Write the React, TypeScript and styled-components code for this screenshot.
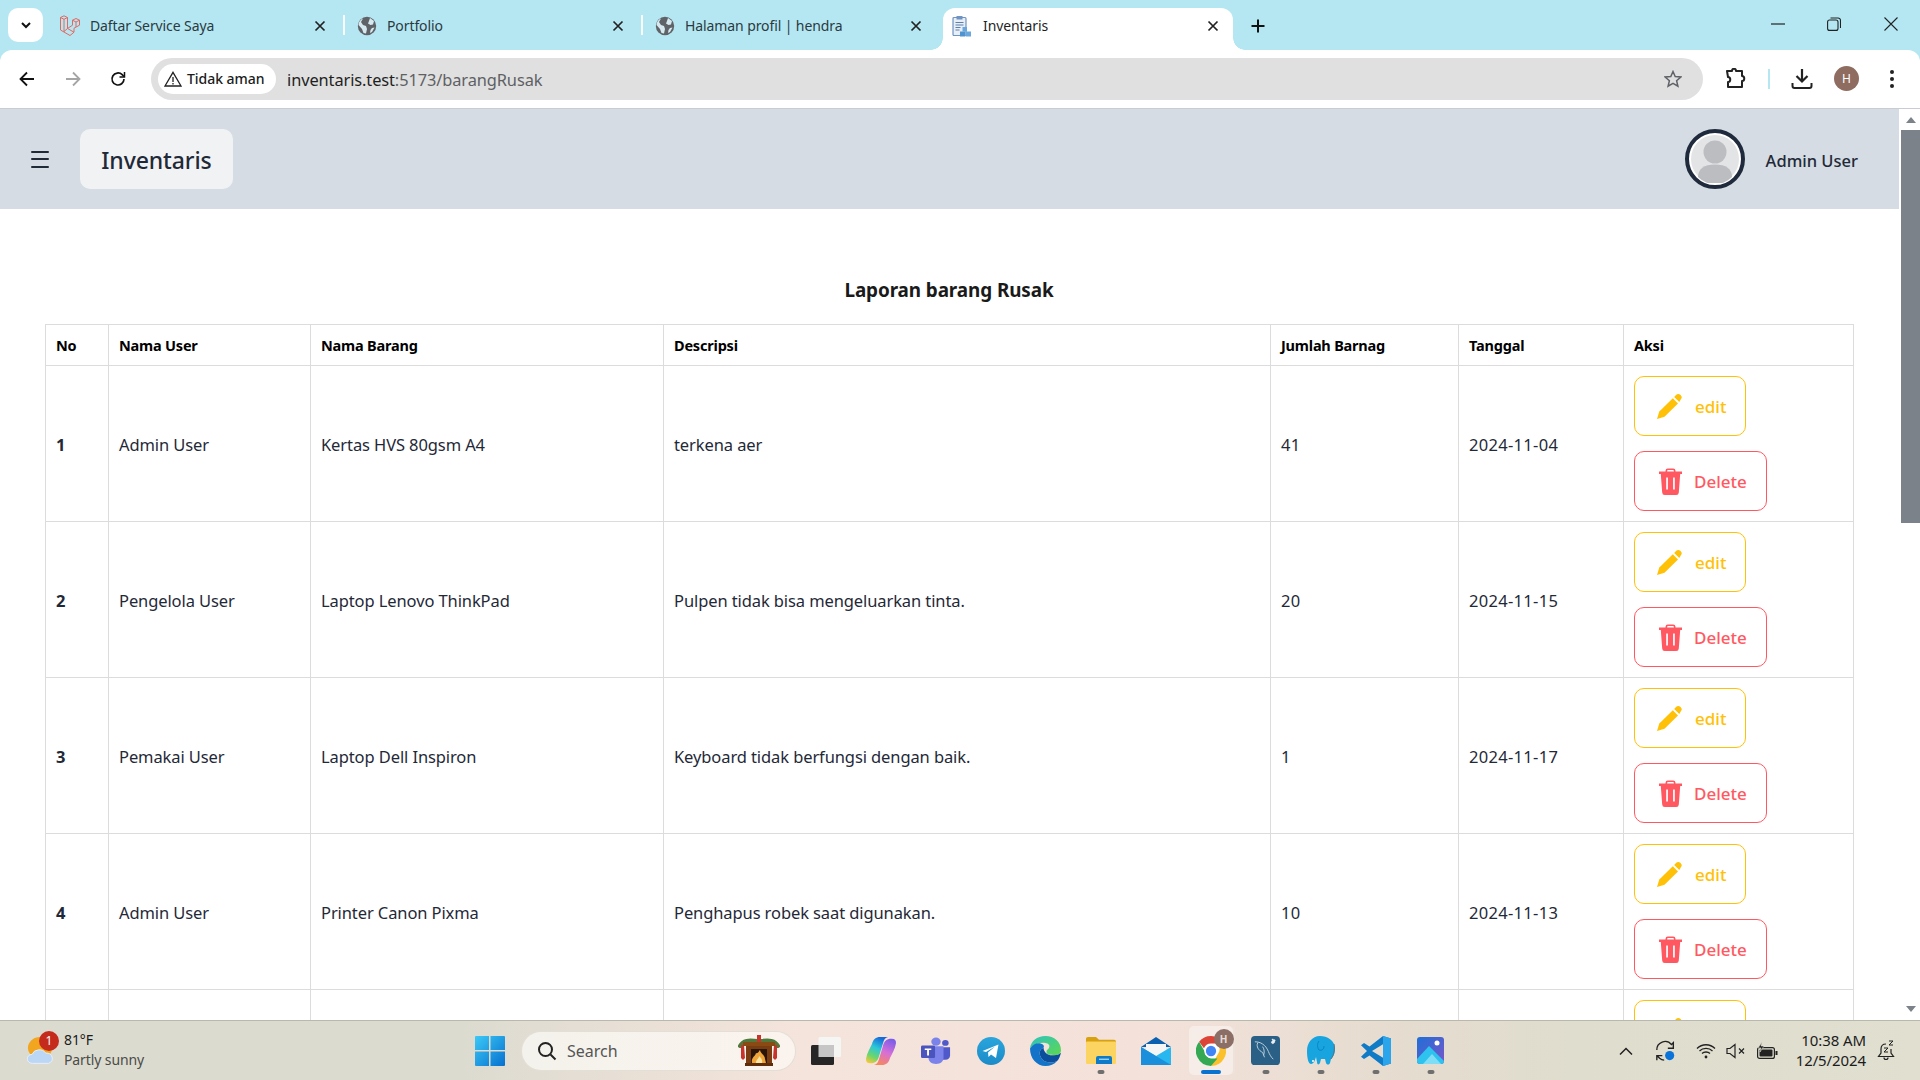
import React from "react";
import styled, { createGlobalStyle } from "styled-components";

const Global = createGlobalStyle`
  html, body { margin: 0; padding: 0; height: 100%; overflow: hidden; background: #fff; }
  body { font-family: "Noto Sans", "Open Sans", sans-serif; color: #1f2937; }
  * { box-sizing: border-box; }
`;

const Shell = styled.div`width: 1920px; height: 1080px; display: flex; flex-direction: column; overflow: hidden;`;

/* ---------- tab strip ---------- */
const TabStrip = styled.div`height: 50px; flex: none; background: #b5e7f3; display: flex; align-items: flex-start; position: relative;`;
const TabSearch = styled.div`width: 35px; height: 34px; margin: 8px 0 0 8px; background: #fff; border-radius: 10px; display: flex; align-items: center; justify-content: center;`;
const Tab = styled.div<{ $active?: boolean }>`
  width: ${p => (p.$active ? 290 : 298)}px; height: 42px; margin-top: 8px; flex: none;
  display: flex; align-items: center; padding: 0 ${p => (p.$active ? 14 : 18)}px 7px ${p => (p.$active ? 9 : 13)}px; gap: ${p => (p.$active ? 11 : 10)}px; position: relative;
  font-size: 14px; color: ${p => (p.$active ? "#1f1f1f" : "#2b3a40")};
  ${p => p.$active && `
    background: #fff; border-radius: 12px 12px 0 0; margin-left: 3px;
    &::before, &::after { content: ""; position: absolute; bottom: 0; width: 12px; height: 12px; }
    &::before { left: -12px; background: radial-gradient(circle at 0 0, #b5e7f3 11.5px, #fff 12px); }
    &::after { right: -12px; background: radial-gradient(circle at 100% 0, #b5e7f3 11.5px, #fff 12px); }
  `}
`;
const TabFirst = styled(Tab)`width: 299px; margin-left: 2px; padding-left: 14px; gap: 9px;`;
const TabTitle = styled.span`flex: 1; white-space: nowrap; overflow: hidden; letter-spacing: -.1px;`;
const TabSep = styled.i`width: 2px; height: 20px; background: #fff; flex: none; margin-top: 15px; margin-left: -1px; margin-right: -1px; opacity: .9;`;
const NewTab = styled.div`margin: 14px 0 0 13px; width: 24px; height: 24px; display: flex; align-items: center; justify-content: center;`;
const WinControls = styled.div`margin-left: auto; display: flex; align-items: center; height: 48px;`;
const WinBtn = styled.div<{ $w: number }>`width: ${p => p.$w}px; display: flex; justify-content: center;`;

/* ---------- toolbar ---------- */
const Toolbar = styled.div`height: 59px; flex: none; background: #b5e7f3;`;
const ToolbarInner = styled.div`height: 59px; background: #fff; border-radius: 12px 12px 0 0; border-bottom: 1px solid #c9ccd0; display: flex; align-items: center; padding: 0 0 1px 15px;`;
const NavIcon = styled.div<{ $mr?: number }>`width: 24px; height: 24px; margin-right: ${p => p.$mr ?? 22}px; display: flex; align-items: center; justify-content: center;`;
const Omnibox = styled.div`width: 1552px; height: 42px; flex: none; background: #e0e0e0; border-radius: 21px; display: flex; align-items: center; padding: 0 21px 0 7px;`;
const Chip = styled.div`width: 118px; height: 30px; border-radius: 15px; background: #fff; display: flex; align-items: center; gap: 5px; padding-left: 6px; font-size: 14px; font-weight: 500; color: #1b1b1b; white-space: nowrap; letter-spacing: -.05px;`;
const Url = styled.div`margin-left: 11px; padding-top: 2px; font-size: 16.4px; color: #5e6064; flex: 1; letter-spacing: -.1px; b { font-weight: 400; color: #1f1f1f; }`;
const TbRight = styled.div`display: flex; align-items: center; margin-left: 22px;`;
const TbSep = styled.i`width: 2px; height: 20px; background: #b5e7f3; margin: 0 21px 0 21px;`;
const ProfileDot = styled.div`width: 25px; height: 25px; border-radius: 50%; background: #8f6c60; color: #fff; font-size: 12px; display: flex; align-items: center; justify-content: center; margin: 0 30px 0 21px;`;

/* ---------- page ---------- */
const Viewport = styled.div`flex: 1; min-height: 0; display: flex;`;
const Page = styled.div`width: 1899px; flex: none; overflow: hidden; background: #fff;`;
const NavBar = styled.header`height: 100px; background: #d5dce4; display: flex; align-items: center; padding: 0 41px 0 30px;`;
const Burger = styled.div`width: 20px; display: flex; flex-direction: column; gap: 5.5px; margin-right: 30px; span { height: 2px; margin: 0 1px; background: #1f2937; border-radius: 1px; }`;
const Brand = styled.div`width: 153px; height: 60px; padding-top: 2px; border-radius: 10px; background: #f1f2f3; display: flex; align-items: center; justify-content: center; font-size: 23px; font-weight: 500; color: #1f2937; letter-spacing: -.1px;`;
const UserBox = styled.div`margin-left: auto; display: flex; align-items: center; gap: 21px; font-size: 16.5px; font-weight: 500; color: #1f2937;`;
const UserName = styled.span`padding-top: 3px;`;
const Avatar = styled.div`width: 60px; height: 60px; border-radius: 50%; border: 4px solid #1f2a3c; padding: 2px; background: #fff;`;
const Content = styled.main`padding: 0 46px 0 45px;`;
const Title = styled.h2`margin: 0; padding-top: 66px; height: 115px; line-height: 30px; text-align: center; font-size: 18.9px; font-weight: 700; color: #1a1a1a; letter-spacing: -.1px;`;
const Table = styled.table`width: 1808px; border-collapse: collapse; table-layout: fixed;`;
const Col = styled.col<{ $w: number }>`width: ${p => p.$w}px;`;
const Th = styled.th`height: 41px; border: 1px solid #dcdcdc; padding: 0 10px; text-align: left; font-size: 14.5px; font-weight: 700; color: #000; letter-spacing: -.2px;`;
const Td = styled.td<{ $bold?: boolean; $num?: boolean }>`border: 1px solid #dcdcdc; padding: 10px; font-size: 16.5px; color: #1f2937; font-weight: ${p => (p.$bold ? 700 : 400)}; letter-spacing: ${p => (p.$num ? ".3px" : "-.1px")};`;
const CellText = styled.span`display: block; padding-top: 1px;`;
const Actions = styled.div`display: flex; flex-direction: column; align-items: flex-start; gap: 15px;`;
const ActionBtn = styled.button<{ $c: string; $w: number; $pad: number }>`
  width: ${p => p.$w}px; height: 60px; border-radius: 10px; border: 1px solid ${p => p.$c}; background: #fff; color: ${p => p.$c};
  display: flex; align-items: center; gap: 12px; padding: 0 0 0 ${p => p.$pad}px; font: 500 17px "Noto Sans", sans-serif;
`;
const Scrollbar = styled.div`width: 21px; flex: none; background: #fff; display: flex; flex-direction: column; align-items: flex-end;`;
const ArrowBtn = styled.div<{ $h: number }>`width: 19px; height: ${p => p.$h}px; display: flex; align-items: center; justify-content: center;`;
const Thumb = styled.div`width: 19px; height: 393px; flex: none; background: #7c8289;`;
const Spacer = styled.div`flex: 1;`;

/* ---------- taskbar ---------- */
const Taskbar = styled.footer`height: 60px; flex: none; border-top: 1px solid #b9b8ae; display: flex; align-items: center;
  background: linear-gradient(90deg, #dcdbd0 0%, #dcdbd0 24%, #f5e4db 42%, #f4e2da 60%, #e6dcd0 72%, #dfddcd 82%, #e0dfd0 100%);`;
const Weather = styled.div`width: 462px; flex: none; display: flex; align-items: center; padding-left: 27px; gap: 9px; position: relative;`;
const WBadge = styled.div`position: absolute; left: 39px; top: -1px; width: 20px; height: 20px; border-radius: 50%; background: #c42b1c; color: #fff; font-size: 12px; display: flex; align-items: center; justify-content: center;`;
const WText = styled.div`margin-top: -2px; font-size: 14px; line-height: 20px; color: #1c1c1c; letter-spacing: -.1px; small { display: block; font-size: 14px; color: #4b4b48; }`;
const Slot = styled.div`width: 55px; height: 52px; flex: none; display: flex; align-items: center; justify-content: center; position: relative;`;
const ActiveSlot = styled(Slot)`width: 44px; height: 49px; margin: 0 5.5px; border-radius: 5px; background: #f6ede8; box-shadow: 3px 0 0 -1px #eee3dc;`;
const Pip = styled.i<{ $active?: boolean }>`position: absolute; left: 50%; bottom: ${p => (p.$active ? 1 : 3)}px; transform: translateX(-50%); height: 4px; border-radius: 2px; width: ${p => (p.$active ? 20 : 7)}px; background: ${p => (p.$active ? "#0a73d0" : "#6f6f6f")};`;
const HBadge = styled.div`position: absolute; right: -1px; top: 3px; width: 20px; height: 20px; border-radius: 50%; background: #8b6f66; color: #e8dcd6; font-size: 10px; font-weight: 700; display: flex; align-items: center; justify-content: center;`;
const SearchBox = styled.div`width: 273px; height: 38px; flex: none; margin: 0 3px 0 5px; border-radius: 19px; background: linear-gradient(90deg, #f4f2ec, #fbf3ee); box-shadow: 0 0 0 1px #e2dfd7; display: flex; align-items: center; padding: 0 15px; gap: 10px; font-size: 16px; color: #555; position: relative;`;
const Fire = styled.div`margin-left: auto; margin-right: 0; display: flex;`;
const Tray = styled.div`margin-left: auto; display: flex; align-items: center; height: 100%; position: relative; padding-right: 14px;`;
const TrayIcon = styled.div<{ $w: number }>`width: ${p => p.$w}px; display: flex; justify-content: center; align-items: center;`;
const Clock = styled.div`width: 79px; margin-top: -2px; text-align: right; font-size: 15px; line-height: 20px; color: #1c1c1c; margin-left: 2px; letter-spacing: -.1px; white-space: nowrap;`;

/* ---------- drawings ---------- */
const Globe = () => (
  <svg width="20" height="20" viewBox="0 0 20 20"><circle cx="10" cy="10" r="9.2" fill="#5f6368" />
    <path d="M6 2.500 4 6l2 3 3 1 1 3-1 4.500-2.500-.5L5 13 1.500 9C2 5 4 3 6 2.500ZM13 2l4 3-1 3.500-2.500.5L11 7.500 12 5Z M15 12l2.500-.5L15 16l-2 1 .5-3Z" fill="#d6e9ef" /></svg>
);
const Close = () => (
  <svg width="12" height="12" viewBox="0 0 12 12"><path d="M1.500 1.500l9 9M10.500 1.500l-9 9" stroke="#222" strokeWidth="1.700" /></svg>
);
const Laravel = () => (
  <svg width="22" height="22" viewBox="0 0 22 22" fill="none" stroke="#e4685f" strokeWidth="1"><path d="M1.500 2.500 5 .8l3.500 1.700v11L15 17.200 11 20.500 1.500 15ZM1.500 2.500 5 4.300l3.500-1.800M5 4.300v12.500M8.500 13.500l-3.500 3M15 17.200v-4l5.500-3v-5L17 3.500l-3.500 1.700v5L8.500 13.500M13.500 5.200 17 7l3.500-1.800M17 7v5" /></svg>
);
const Clipboard = () => (
  <svg width="20" height="22" viewBox="0 0 20 22"><rect x="1" y="2.500" width="13" height="18" rx="1" fill="#e8eef6" stroke="#6f93c2" strokeWidth="1.200" /><rect x="4.500" y="1" width="6" height="3.500" fill="#6f93c2" /><path d="M3.500 7.500h8M3.500 10h8M3.500 12.500h5M3.500 15h4" stroke="#5d7fae" /><rect x="10.500" y="12" width="4.500" height="4.500" fill="#6aa7dd" /><rect x="8" y="16.500" width="5" height="5" fill="#4f93d1" /><rect x="13.500" y="16.500" width="5.500" height="5" fill="#6aa7dd" /></svg>
);
const Pencil = () => (
  <svg width="26" height="26" viewBox="0 0 26 26" fill="currentColor"><path d="M0 26 2.300 18.600 15.800 5.300 21 10.500 7.500 23.800Z" /><path d="M17.200 3.900 19 2.100a3.200 3.200 0 0 1 4.700 4.400L22.300 9Z" /></svg>
);
const Trash = () => (
  <svg width="23" height="27" viewBox="0 0 23 27" fill="currentColor"><path d="M0 3.500h23v2.500H0Z" /><path d="M6.500 4V2.800A2.300 2.300 0 0 1 8.800.5h5.400a2.300 2.300 0 0 1 2.300 2.300V4h-1.600V3a1 1 0 0 0-1-1H9.100a1 1 0 0 0-1 1v1Z" /><path fillRule="evenodd" d="M1.800 6h19.400l-1.400 18.500A2.600 2.600 0 0 1 17.200 27H5.800a2.600 2.600 0 0 1-2.600-2.500ZM7.200 9.500v12h1.700v-12Zm6.900 0v12h1.700v-12Z" /></svg>
);
const Person = () => (
  <svg width="48" height="48" viewBox="0 0 48 48" style={{ display: "block" }}><circle cx="24" cy="24" r="24" fill="#e3e4e6" /><circle cx="24" cy="17" r="11.500" fill="#bcbdc0" /><path d="M7 42c0-8 6-12.500 17-12.500S41 34 41 42a24 24 0 0 1-34 0Z" fill="#bcbdc0" /></svg>
);
const WinLogo = () => (
  <svg width="30" height="30" viewBox="0 0 30 30"><defs><linearGradient id="wl" x1="0" y1="0" x2="1" y2="1"><stop offset="0" stopColor="#3cc9f6" /><stop offset="1" stopColor="#0670cf" /></linearGradient></defs><path fill="url(#wl)" d="M0 1a1 1 0 0 1 1-1h13v14H0ZM15.500 0H29a1 1 0 0 1 1 1v13H15.500ZM0 15.500h14V30H1a1 1 0 0 1-1-1ZM15.500 15.500H30V29a1 1 0 0 1-1 1H15.500Z" /></svg>
);
const Fireplace = () => (
  <svg width="42" height="31" viewBox="0 0 42 31">
    <path d="M2 11C5 5 11 5 19 6M40 11C37 5 31 5 23 6" fill="none" stroke="#4f7a3d" strokeWidth="4" strokeLinecap="round" />
    <rect x="19" y="0" width="4" height="7" fill="#c8342b" />
    <path d="M3 10h3l1 13-2 2-2-2ZM36 10h3l0 13-2 2-2-2Z" fill="#c8342b" />
    <rect x="5" y="7" width="32" height="4" fill="#8a4a14" />
    <rect x="8" y="11" width="26" height="18" fill="#7a3d12" />
    <rect x="7" y="28" width="28" height="3" fill="#5f2d0c" />
    <rect x="13" y="14" width="16" height="14" fill="#2a1609" />
    <path d="M14 28c-1-6 3-6 4-10 2 1 3-2 4-3 0 3 5 5 5 9l1 4Z" fill="#f0a53a" />
    <path d="M18 28c0-4 3-4 3-7 2 2 4 4 3 7Z" fill="#f9e7a6" />
  </svg>
);
const TaskView = () => (
  <svg width="30" height="28" viewBox="0 0 30 28"><rect x="7.500" y="0" width="22.500" height="20" rx="1.500" fill="#f5f5f4" /><rect x="0" y="8" width="23" height="20" rx="1.500" fill="#262626" /><rect x="7.500" y="8" width="15.500" height="12" fill="#c6c6c6" /></svg>
);
const Copilot = () => (
  <svg width="30" height="28" viewBox="0 0 30 32" preserveAspectRatio="none">
    <defs>
      <linearGradient id="cp1" x1=".6" y1="0" x2=".2" y2="1"><stop offset="0" stopColor="#1668dc" /><stop offset=".4" stopColor="#2cc7d8" /><stop offset=".75" stopColor="#6fd668" /><stop offset="1" stopColor="#f4c83a" /></linearGradient>
      <linearGradient id="cp2" x1=".7" y1="0" x2=".3" y2="1"><stop offset="0" stopColor="#7c5de8" /><stop offset=".5" stopColor="#d76fd8" /><stop offset="1" stopColor="#f7885c" /></linearGradient>
    </defs>
    <path d="M14 0h8c-3 1-4 3-5 7l-4 15c-1 5-4 8-8 8H4c-3 0-4-2-4-5 1-7 4-12 6-17 1-5 4-8 8-8Z" fill="url(#cp1)" />
    <path d="M16 32H8c3-1 4-3 5-7l4-15c1-5 4-8 8-8h1c3 0 4 2 4 5-1 7-4 12-6 17-1 5-4 8-8 8Z" fill="url(#cp2)" />
  </svg>
);
const Teams = () => (
  <svg width="30" height="27" viewBox="0 0 32 32" preserveAspectRatio="none"><circle cx="16" cy="5.500" r="5" fill="#7b83eb" /><circle cx="26" cy="7" r="3.500" fill="#5059c9" /><path d="M21 12h10v10c0 3-2 5-5 5h-5Z" fill="#5059c9" /><path d="M8 11h16v14c0 4-3 7-8 7s-8-3-8-7Z" fill="#7b83eb" /><rect x="0" y="10" width="15" height="15" rx="1.500" fill="#4b53bc" /><path d="M4 13.500h7v1.800H8.500V22h-2v-6.700H4Z" fill="#fff" /></svg>
);
const Telegram = () => (
  <svg width="28" height="28" viewBox="0 0 28 28"><defs><linearGradient id="tg" x1="0" y1="0" x2="0" y2="1"><stop offset="0" stopColor="#2aa5dc" /><stop offset="1" stopColor="#1b8bc8" /></linearGradient></defs><circle cx="14" cy="14" r="14" fill="url(#tg)" /><path d="M5.500 14 21.500 7.500 19 21l-5-3.500-2.500 2.500-.5-4.500 7-6-9 5.500Z" fill="#fff" /></svg>
);
const Edge = () => (
  <svg width="31" height="30" viewBox="0 0 32 36" preserveAspectRatio="none"><defs><linearGradient id="e1" x1="0" y1="0" x2="1" y2="1"><stop offset="0" stopColor="#2dc3c0" /><stop offset="1" stopColor="#5fd84f" /></linearGradient></defs><path d="M16 0c9 0 16 7 16 17 0 4-3 6-7 6-3 0-8 0-8-4 0-3 3-3 3-7S13 7 8 9C3 11 0 15 0 15 1 6 7 0 16 0Z" fill="url(#e1)" /><path d="M0 15c3-5 7-7 11-6 3 1 4 3 3 5-4 2-5 6-3 11 2 6 9 9 17 5-3 4-7 6-12 6C7 36 0 27 0 15Z" fill="#1273c9" /><path d="M11 25c-2-5-1-9 3-11 0 5 4 10 11 9 3 0 5-1 7-3-1 4-2 8-4 10-8 4-15 1-17-5Z" fill="#0b4f9c" /></svg>
);
const Folder = () => (
  <svg width="30" height="27" viewBox="0 0 30 30" preserveAspectRatio="none"><path d="M0 2a2 2 0 0 1 2-2h8l3 3h15a2 2 0 0 1 2 2v4H0Z" fill="#d8a10f" /><rect x="0" y="5" width="30" height="25" rx="1" fill="#fcd462" /><rect x="5" y="4.500" width="25" height="1" fill="#e8b83a" /><path d="M10 23a2 2 0 0 1 2-2h12a2 2 0 0 1 2 2v7H10Z" fill="#0f7bc8" /><rect x="13" y="24" width="10" height="1.500" fill="#9fd4f5" /></svg>
);
const Mail = () => (
  <svg width="30" height="28" viewBox="0 0 30 28"><path d="M15 0 30 10H0Z" fill="#0a5fb0" /><path d="M5 7h20v9l-10 5-10-5Z" fill="#f5f5f5" /><path d="M0 10l15 9 15-9v18H0Z" fill="#29b7ef" /><path d="M0 10v18h30L15 19Z" fill="#1a8fdb" /></svg>
);
const Chrome = () => (
  <svg width="30" height="30" viewBox="0 0 32 32"><circle cx="16" cy="16" r="16" fill="#fff" /><path d="M16 0a16 16 0 0 1 13.900 8H16a8 8 0 0 0-7.500 5L3.300 6.200A16 16 0 0 1 16 0Z" fill="#dc4437" /><path d="M29.900 8A16 16 0 0 1 16 32l6.900-12A8 8 0 0 0 22 8Z" fill="#fbc02d" /><path d="M16 32A16 16 0 0 1 3.300 6.200L9 16a8 8 0 0 0 7 8h6.900Z" fill="#34a853" /><circle cx="16" cy="16" r="7" fill="#fff" /><circle cx="16" cy="16" r="5.500" fill="#4285f4" /></svg>
);
const MySql = () => (
  <svg width="29" height="29" viewBox="0 0 30 30"><rect width="30" height="30" rx="4" fill="#2a5f86" /><path d="M4 6c6 0 11 3 14 10 1 3 3 6 5 8M7 7c-2 4 1 8 5 10l2 5M12 11c2 3 2 6 1 9" fill="none" stroke="#bcd0de" strokeWidth="1" /><path d="M22 3l2 3-2 2M25 4l-4 3" fill="none" stroke="#e8eef2" strokeWidth="1.800" /></svg>
);
const Pg = () => (
  <svg width="28" height="29" viewBox="0 0 28 29">
    <path d="M13 0C20 0 28 4 28 13c0 6-3 9-4 10l-1 4c-1 2-3 2-4 0l-1-4h-4l-1 4c-1 2-3 2-3-1l-1-5c-1 3-2 7-5 7-2 0-4-4-4-13C0 7 5 0 13 0Z" fill="#18a4df" />
    <path d="M27 8c1 5 0 11-3 15" fill="none" stroke="#5b7480" strokeWidth="1" />
    <path d="M12 5c-2 3-2 6 0 9 3 1 5-1 5-4" fill="none" stroke="#0a86c0" strokeWidth="1" />
    <circle cx="6" cy="25" r="1" fill="#fff" />
  </svg>
);
const VsCode = () => (
  <svg width="30" height="30" viewBox="0 0 30 36" preserveAspectRatio="none">
    <path fillRule="evenodd" d="M22 0 8.500 12.500 3 8.500 0 11l6 7-6 7 3 2.500 5.500-4L22 36l8-3V3ZM22 10v16L11 18Z" fill="#0f7ac6" />
    <path d="M22 0 30 3v30l-8 3Z" fill="#2aa5ec" />
  </svg>
);
const Photos = () => (
  <svg width="27" height="27" viewBox="0 0 27 27"><defs><linearGradient id="ph" x1="0" y1="0" x2="1" y2="1"><stop offset="0" stopColor="#1e6fd8" /><stop offset="1" stopColor="#7a55c8" /></linearGradient></defs><rect width="27" height="27" rx="3" fill="url(#ph)" /><circle cx="20" cy="6" r="2.500" fill="#fff" /><path d="M0 22 12 9l15 15a3 3 0 0 1-3 3H3a3 3 0 0 1-3-3Z" fill="#2ec2ee" /><path d="M6 27 15 17l9 10Z" fill="#7fdef5" /></svg>
);

const rows = [
  { no: 1, user: "Admin User", item: "Kertas HVS 80gsm A4", desc: "terkena aer", qty: "41", date: "2024-11-04" },
  { no: 2, user: "Pengelola User", item: "Laptop Lenovo ThinkPad", desc: "Pulpen tidak bisa mengeluarkan tinta.", qty: "20", date: "2024-11-15" },
  { no: 3, user: "Pemakai User", item: "Laptop Dell Inspiron", desc: "Keyboard tidak berfungsi dengan baik.", qty: "1", date: "2024-11-17" },
  { no: 4, user: "Admin User", item: "Printer Canon Pixma", desc: "Penghapus robek saat digunakan.", qty: "10", date: "2024-11-13" },
];
const cols = [63, 202, 353, 607, 188, 165, 230];
const heads = ["No", "Nama User", "Nama Barang", "Descripsi", "Jumlah Barnag", "Tanggal", "Aksi"];

export default function App() {
  return (
    <Shell>
      <Global />
      <TabStrip>
        <TabSearch><svg width="14" height="14" viewBox="0 0 14 14"><path d="M3 5l4 4 4-4" fill="none" stroke="#111" strokeWidth="2" /></svg></TabSearch>
        <TabFirst><Laravel /><TabTitle>Daftar Service Saya</TabTitle><Close /></TabFirst>
        <TabSep />
        <Tab><Globe /><TabTitle>Portfolio</TabTitle><Close /></Tab>
        <TabSep />
        <Tab><Globe /><TabTitle>Halaman profil | hendra</TabTitle><Close /></Tab>
        <Tab $active><Clipboard /><TabTitle>Inventaris</TabTitle><Close /></Tab>
        <NewTab><svg width="16" height="16" viewBox="0 0 16 16"><path d="M8 1.500v13M1.500 8h13" stroke="#111" strokeWidth="2" /></svg></NewTab>
        <WinControls>
          <WinBtn $w={57}><svg width="14" height="2" viewBox="0 0 14 2"><path d="M0 1h14" stroke="#222" strokeWidth="1.200" /></svg></WinBtn>
          <WinBtn $w={56}><svg width="14" height="14" viewBox="0 0 14 14" fill="none" stroke="#222" strokeWidth="1.100"><rect x=".6" y="3" width="10.400" height="10.400" rx="2" /><path d="M3.500 1h7.500a2.500 2.500 0 0 1 2.500 2.500V11" /></svg></WinBtn>
          <WinBtn $w={58}><svg width="14" height="14" viewBox="0 0 14 14"><path d="M.5.5l13 13M13.500.5l-13 13" stroke="#222" strokeWidth="1.100" /></svg></WinBtn>
        </WinControls>
      </TabStrip>
      <Toolbar>
        <ToolbarInner>
          <NavIcon><svg width="16" height="16" viewBox="0 0 16 16" fill="none" stroke="#111" strokeWidth="1.800"><path d="M15 8H2M8 1.500 1.500 8 8 14.500" /></svg></NavIcon>
          <NavIcon $mr={21}><svg width="16" height="16" viewBox="0 0 16 16" fill="none" stroke="#a5a5a5" strokeWidth="1.800"><path d="M1 8h13M8 1.500 14.500 8 8 14.500" /></svg></NavIcon>
          <NavIcon $mr={21}><svg width="16" height="16" viewBox="0 0 16 16" fill="none" stroke="#111" strokeWidth="1.700"><path d="M14 8a6 6 0 1 1-1.800-4.300L14 5.500" /><path d="M14.500 1v5h-5" strokeWidth="1.500" /></svg></NavIcon>
          <Omnibox>
            <Chip>
              <svg width="18" height="16" viewBox="0 0 18 16" fill="none" stroke="#222" strokeWidth="1.300"><path d="M9 1.300 17 15H1Z" /><path d="M9 6v5M9 12v1.500" /></svg>
              Tidak aman
            </Chip>
            <Url><b>inventaris.test</b>:5173/barangRusak</Url>
            <svg width="18" height="18" viewBox="0 0 18 18" fill="none" stroke="#5f6368" strokeWidth="1.500"><path d="M9 1.500 11.200 6.500 16.800 7 12.600 10.700 13.900 16.200 9 13.300 4.100 16.200 5.400 10.700 1.200 7 6.800 6.500Z" /></svg>
          </Omnibox>
          <TbRight>
            <svg width="22" height="22" viewBox="0 0 22 22" fill="none" stroke="#222" strokeWidth="2"><path d="M2 3h5c0-3 4-3 4 0h6v5c3 0 3 5 0 5v6H3v-5c3 0 3-5 0-5Z" strokeLinejoin="round" /></svg>
            <TbSep />
            <svg width="22" height="22" viewBox="0 0 22 22" fill="none" stroke="#222" strokeWidth="2"><path d="M11 1v12M5.500 8l5.500 5.500L16.500 8" strokeWidth="2.200" /><path d="M1.500 15v3a2 2 0 0 0 2 2h15a2 2 0 0 0 2-2v-3" /></svg>
            <ProfileDot>H</ProfileDot>
            <svg width="6" height="20" viewBox="0 0 6 20" fill="#222"><circle cx="3" cy="3" r="2" /><circle cx="3" cy="10" r="2" /><circle cx="3" cy="17" r="2" /></svg>
          </TbRight>
        </ToolbarInner>
      </Toolbar>

      <Viewport>
        <Page>
          <NavBar>
            <Burger><span /><span /><span /></Burger>
            <Brand>Inventaris</Brand>
            <UserBox>
              <Avatar><Person /></Avatar>
              <UserName>Admin User</UserName>
            </UserBox>
          </NavBar>
          <Content>
            <Title>Laporan barang Rusak</Title>
            <Table>
              <colgroup>{cols.map((w, i) => <Col key={i} $w={w} />)}</colgroup>
              <thead><tr>{heads.map(h => <Th key={h}>{h}</Th>)}</tr></thead>
              <tbody>
                {rows.map(r => (
                  <tr key={r.no}>
                    <Td $bold><CellText>{r.no}</CellText></Td>
                    <Td><CellText>{r.user}</CellText></Td>
                    <Td><CellText>{r.item}</CellText></Td>
                    <Td><CellText>{r.desc}</CellText></Td>
                    <Td $num><CellText>{r.qty}</CellText></Td>
                    <Td $num><CellText>{r.date}</CellText></Td>
                    <Td>
                      <Actions>
                        <ActionBtn $c="#ffc107" $w={112} $pad={22}><Pencil />edit</ActionBtn>
                        <ActionBtn $c="#ff5861" $w={133} $pad={24}><Trash />Delete</ActionBtn>
                      </Actions>
                    </Td>
                  </tr>
                ))}
                <tr>
                  <Td /><Td /><Td /><Td /><Td /><Td />
                  <Td><Actions><ActionBtn $c="#ffc107" $w={112} $pad={22}><Pencil /></ActionBtn></Actions></Td>
                </tr>
              </tbody>
            </Table>
          </Content>
        </Page>
        <Scrollbar>
          <ArrowBtn $h={21}><svg width="10" height="6" viewBox="0 0 10 6"><path d="M0 6 5 0l5 6Z" fill="#7c8289" /></svg></ArrowBtn>
          <Thumb />
          <Spacer />
          <ArrowBtn $h={22}><svg width="10" height="6" viewBox="0 0 10 6"><path d="M0 0l5 6 5-6Z" fill="#7c8289" /></svg></ArrowBtn>
        </Scrollbar>
      </Viewport>

      <Taskbar>
        <Weather>
          <svg width="28" height="28" viewBox="0 0 30 34" preserveAspectRatio="none"><circle cx="14" cy="13" r="13" fill="#f2a51e" /><path d="M6 32a5.500 5.500 0 0 1-.5-11A8 8 0 0 1 20 19.500 6.500 6.500 0 0 1 23 32Z" fill="#bcd6f5" stroke="#e9f2fc" /></svg>
          <WBadge>1</WBadge>
          <WText>81°F<small>Partly sunny</small></WText>
        </Weather>
        <Slot><WinLogo /></Slot>
        <SearchBox>
          <svg width="20" height="20" viewBox="0 0 20 20" fill="none" stroke="#222" strokeWidth="2"><circle cx="8.500" cy="8.500" r="6.500" /><path d="M13.500 13.500 18.500 18.500" /></svg>
          Search
          <Fire><Fireplace /></Fire>
        </SearchBox>
        <Slot><TaskView /></Slot>
        <Slot><Copilot /></Slot>
        <Slot><Teams /></Slot>
        <Slot><Telegram /></Slot>
        <Slot><Edge /></Slot>
        <Slot><Folder /><Pip /></Slot>
        <Slot><Mail /></Slot>
        <ActiveSlot><Chrome /><HBadge>H</HBadge><Pip $active /></ActiveSlot>
        <Slot><MySql /><Pip /></Slot>
        <Slot><Pg /><Pip /></Slot>
        <Slot><VsCode /><Pip /></Slot>
        <Slot><Photos /><Pip /></Slot>
        <Tray>
          <TrayIcon $w={34}><svg width="14" height="8" viewBox="0 0 14 8" fill="none" stroke="#222" strokeWidth="1.500"><path d="M1 7.500 7 1.500l6 6" /></svg></TrayIcon>
          <TrayIcon $w={46}><svg width="22" height="24" viewBox="0 0 24 26" fill="none" stroke="#222" strokeWidth="1.500"><path d="M2 12a9 9 0 0 1 16-6l2-2v6h-6" /><path d="M2 23v-5h6M2 18l3 3a8 8 0 0 0 5 2" /><circle cx="16" cy="18" r="5" fill="#0a73d9" stroke="none" /></svg></TrayIcon>
          <TrayIcon $w={34}><svg width="20" height="16" viewBox="0 0 20 16" fill="none" stroke="#222" strokeWidth="1.300"><path d="M1 5.500c5-5 13-5 18 0M3.500 8c3.500-3.500 9.500-3.500 13 0M6 10.500c2-2 6-2 8 0" /><circle cx="10" cy="14" r="1.400" fill="#222" stroke="none" /></svg></TrayIcon>
          <TrayIcon $w={26}><svg width="20" height="16" viewBox="0 0 20 16" fill="none" stroke="#222" strokeWidth="1.200"><path d="M1 5.500h3L9 1.500v13l-5-4H1Z" /><path d="M13 5.500l5 5M18 5.500l-5 5" /></svg></TrayIcon>
          <TrayIcon $w={36}><svg width="22" height="18" viewBox="0 0 22 18"><rect x="1.600" y="5.600" width="16.800" height="10.800" rx="2" fill="#e0dfd0" stroke="#222" strokeWidth="1.200" /><rect x="3.500" y="7.500" width="13" height="7" rx="1" fill="#222" /><rect x="19.500" y="9" width="2" height="4" fill="#222" /><path d="M6 0 2 6h3l-1 4 4-6H5Z" fill="#222" stroke="#e0dfd0" strokeWidth=".6" /></svg></TrayIcon>
          <Clock>10:38 AM<br />12/5/2024</Clock>
          <TrayIcon $w={40}><svg width="18" height="22" viewBox="0 0 18 22" fill="none" stroke="#222" strokeWidth="1.200"><path d="M9 4c-3 0-5 2-5 5v4l-2.500 3.500h15L14 13V9" /><path d="M7 17.500a2 2 0 0 0 4 0" /><path d="M7 8h4l-4 4h4M12 1h4l-4 4h4" strokeWidth="1" /></svg></TrayIcon>
        </Tray>
      </Taskbar>
    </Shell>
  );
}
